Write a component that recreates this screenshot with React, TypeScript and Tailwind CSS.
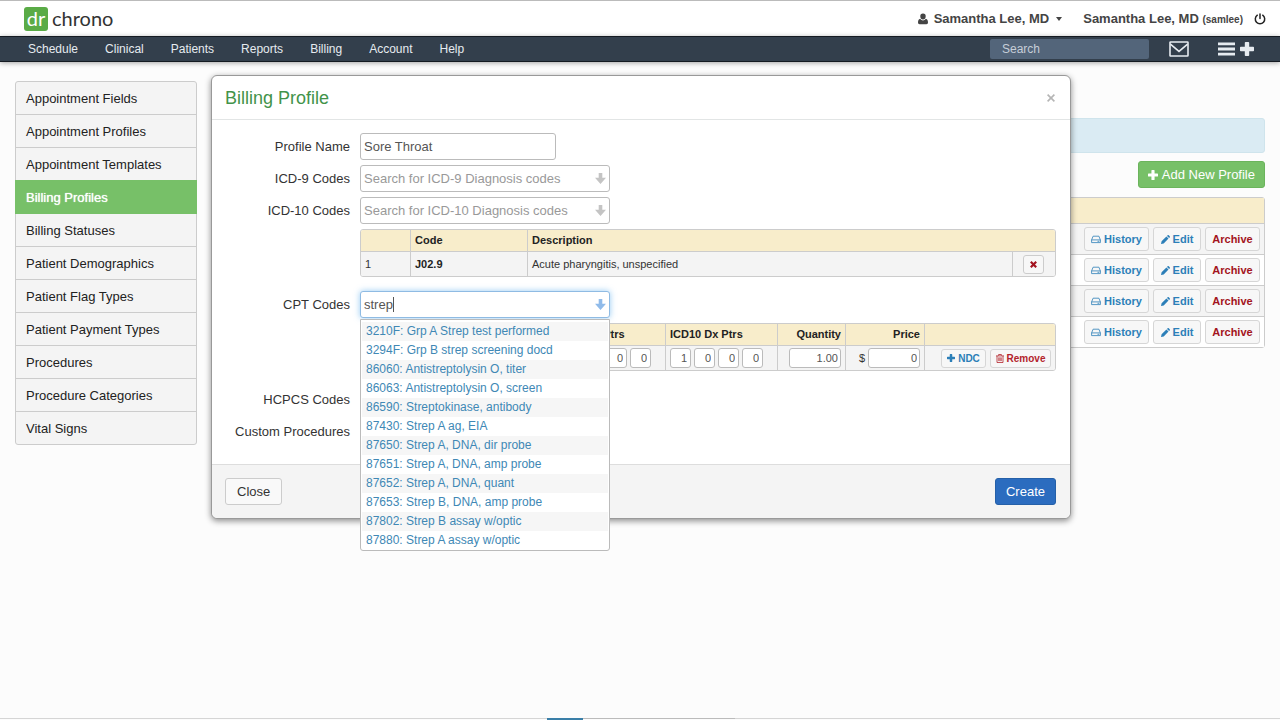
import type { ReactNode } from "react";
import clsx from "clsx";

const navItems = ["Schedule", "Clinical", "Patients", "Reports", "Billing", "Account", "Help"];

const sideItems = [
  "Appointment Fields",
  "Appointment Profiles",
  "Appointment Templates",
  "Billing Profiles",
  "Billing Statuses",
  "Patient Demographics",
  "Patient Flag Types",
  "Patient Payment Types",
  "Procedures",
  "Procedure Categories",
  "Vital Signs",
];

const suggestions = [
  "3210F: Grp A Strep test performed",
  "3294F: Grp B strep screening docd",
  "86060: Antistreptolysin O, titer",
  "86063: Antistreptolysin O, screen",
  "86590: Streptokinase, antibody",
  "87430: Strep A ag, EIA",
  "87650: Strep A, DNA, dir probe",
  "87651: Strep A, DNA, amp probe",
  "87652: Strep A, DNA, quant",
  "87653: Strep B, DNA, amp probe",
  "87802: Strep B assay w/optic",
  "87880: Strep A assay w/optic",
];

/* Icons */
function UserIcon() {
  return (
    <svg className="h-3 w-[10px]" viewBox="0 0 10 12" fill="currentColor" aria-hidden="true">
      <path d="M5 .6a2.700 2.700 0 0 1 2.700 2.800C7.700 5 6.600 6.500 5 6.500S2.300 5 2.300 3.400A2.700 2.700 0 0 1 5 .6z" />
      <path d="M2.200 5.700C3 6.900 3.900 7.400 5 7.400s2-.5 2.800-1.700C9.400 6 10 7.600 10 9.500c0 1-.7 1.700-1.600 1.700H1.600C.7 11.200 0 10.500 0 9.500c0-1.900.6-3.500 2.200-3.800z" />
    </svg>
  );
}

function PowerIcon() {
  return (
    <svg className="h-3 w-3" viewBox="0 0 12 12" fill="none" stroke="currentColor" strokeWidth="1.5" strokeLinecap="round" aria-hidden="true">
      <path d="M3.300 2.200a4.700 4.700 0 1 0 5.400 0M6 .9v4.600" />
    </svg>
  );
}

function EnvelopeIcon() {
  return (
    <svg className="h-4 w-5" viewBox="0 0 20 16" fill="none" stroke="currentColor" strokeWidth="1.6" aria-hidden="true">
      <rect x="1" y="1" width="18" height="14" rx=".6" />
      <path d="M1.400 3.200 10 10.400l8.600-7.200" />
    </svg>
  );
}

function BarsIcon() {
  return (
    <svg className="h-[14px] w-[17px]" viewBox="0 0 17 14" fill="currentColor" aria-hidden="true">
      <path d="M0 .5h17v2.800H0zM0 5.600h17v2.800H0zM0 10.700h17v2.800H0z" />
    </svg>
  );
}

function PlusIcon({ className }: { className: string }) {
  return (
    <svg className={className} viewBox="0 0 14 14" fill="currentColor" aria-hidden="true">
      <path d="M5.600 0h2.800a.8.8 0 0 1 .8.800v4h4a.8.8 0 0 1 .8.800v2.800a.8.8 0 0 1-.8.800h-4v4a.8.8 0 0 1-.8.800H5.600a.8.8 0 0 1-.8-.8v-4h-4A.8.8 0 0 1 0 8.400V5.600a.8.8 0 0 1 .8-.8h4v-4a.8.8 0 0 1 .8-.8z" />
    </svg>
  );
}

function DriveIcon() {
  return (
    <svg className="h-[9px] w-[10px]" viewBox="0 0 10 9" fill="none" stroke="currentColor" strokeWidth=".8" aria-hidden="true">
      <path d="M.6 4.900 2.100 1.200h5.800l1.500 3.700v2.700H.6zM.6 4.900h8.800M6.500 6.300h1.800" />
    </svg>
  );
}

function PencilIcon() {
  return (
    <svg className="h-[9px] w-[9px]" viewBox="0 0 9 9" fill="currentColor" aria-hidden="true">
      <path d="M0 9l.6-2.700 4.800-4.800 2.100 2.100-4.800 4.800zM6 .9l.6-.6a.9.900 0 0 1 1.200 0l.9.900a.9.900 0 0 1 0 1.200l-.6.6z" />
    </svg>
  );
}

function TrashIcon() {
  return (
    <svg className="h-[9px] w-2" viewBox="0 0 8 9" fill="none" stroke="currentColor" strokeWidth=".8" aria-hidden="true">
      <path d="M0 1.900h8M2.600 1.700V.5h2.800v1.200M1 2v6.500h6V2M2.800 3.400v3.700M4 3.400v3.700M5.200 3.400v3.700" />
    </svg>
  );
}

function CrossIcon() {
  return (
    <svg className="h-[7px] w-[7px]" viewBox="0 0 7 7" stroke="currentColor" strokeWidth="2.2" aria-hidden="true">
      <path d="M.8.800l5.400 5.400M6.200.800.8 6.200" />
    </svg>
  );
}

function CloseIcon() {
  return (
    <svg className="h-2 w-2" viewBox="0 0 8 8" stroke="currentColor" strokeWidth="1.6" aria-hidden="true">
      <path d="M.6.600l6.800 6.800M7.400.600.6 7.400" />
    </svg>
  );
}

function ArrowDownIcon({ className }: { className: string }) {
  return (
    <svg className={className} viewBox="0 0 11 11" fill="currentColor" aria-hidden="true">
      <path d="M3.700 0h3.600v4.700H11L5.500 11 0 4.700h3.700z" />
    </svg>
  );
}

/* Form pieces */
function FormRow({ id, label, children }: { id: string; label: string; children: ReactNode }) {
  return (
    <div className="flex gap-[10px]">
      <label htmlFor={id} className="w-[125px] shrink-0 text-right leading-7">
        {label}
      </label>
      <div className="min-w-0 flex-1">{children}</div>
    </div>
  );
}

function SearchBox({ id, placeholder, value, active }: { id: string; placeholder?: string; value?: string; active?: boolean }) {
  return (
    <div className="relative w-[250px]">
      <input
        id={id}
        type="text"
        placeholder={placeholder}
        defaultValue={value}
        className={clsx(
          "block h-[27px] w-full rounded-[3px] border bg-white pr-5 pl-[3px] text-[13px] text-[#555] outline-none placeholder:text-[#999]",
          active ? "border-[#8fbbe3] shadow-[0_0_6px_rgba(82,168,236,0.6)]" : "border-[#bbb]"
        )}
      />
      <ArrowDownIcon
        className={clsx("absolute top-2 right-1 h-[11px] w-[11px]", active ? "text-[#90bbea]" : "text-[#c4c4c4]")}
      />
      {active && <span className="absolute top-[6px] left-[33px] h-[15px] w-px bg-[#555]" />}
    </div>
  );
}

function Pointers({ name, values }: { name: string; values: string[] }) {
  return (
    <div className="flex gap-[3px]">
      {values.map((v, i) => (
        <input
          key={i}
          type="text"
          aria-label={`${name} ${i + 1}`}
          defaultValue={v}
          className="h-5 w-[21px] rounded-[3px] border border-[#bbb] bg-white pr-[3px] text-right text-[11px] text-[#555]"
        />
      ))}
    </div>
  );
}

function SmallButton({ className, children }: { className: string; children: ReactNode }) {
  return (
    <button
      type="button"
      className={clsx("flex items-center justify-center gap-[3px] rounded-[3px] border border-[#d6d6d6] bg-[#f7f7f7] font-bold", className)}
    >
      {children}
    </button>
  );
}

function Header() {
  return (
    <header>
      <div className="flex h-9 items-center justify-between border-t border-[#bbb] bg-white pr-[14px] pl-6">
        <a href="#" className="flex gap-1 font-[Lato,sans-serif] text-[20px] leading-[22px] text-[#333]">
          <span className="h-6 w-6 rounded-[3px] bg-[#5aab46] text-center text-white">dr</span>
          <span>chrono</span>
        </a>
        <div className="flex items-center text-[13px] font-bold text-[#444]">
          <button type="button" className="flex items-center gap-[6px]">
            <UserIcon />
            Samantha Lee, MD
            <span className="ml-px border-x-3 border-t-4 border-x-transparent border-t-[#444]" />
          </button>
          <span className="ml-[21px]">
            Samantha Lee, MD <span className="text-[10px]">(samlee)</span>
          </span>
          <button type="button" aria-label="Log out" className="ml-[11px] text-[#222]">
            <PowerIcon />
          </button>
        </div>
      </div>
      <nav className="flex h-[26px] items-center border-y border-[#151b22] bg-[#333f4c] pr-[26px] pl-7 text-[12px] text-[#e6ebf0] shadow-[0_1px_5px_rgba(0,0,0,0.35)]">
        <div className="flex flex-1 gap-[27px]">
          {navItems.map((item) => (
            <a key={item} href="#">
              {item}
            </a>
          ))}
        </div>
        <input
          type="search"
          aria-label="Search"
          placeholder="Search"
          className="h-5 w-[159px] rounded-[2px] bg-[#53657a] px-3 text-[12px] placeholder:text-[#c6ced8]"
        />
        <button type="button" aria-label="Messages" className="ml-5">
          <EnvelopeIcon />
        </button>
        <button type="button" aria-label="Menu" className="ml-[29px] flex items-center gap-[5px]">
          <BarsIcon />
          <PlusIcon className="h-[14px] w-[14px]" />
        </button>
      </nav>
    </header>
  );
}

function Sidebar() {
  return (
    <aside className="w-[182px] shrink-0">
      <ul className="rounded-[3px] border border-[#ccc] bg-[#f4f4f4] text-[13px] text-[#222]">
        {sideItems.map((item) => (
          <li key={item} className="border-b border-[#ccc] last:border-b-0">
            <a
              href="#"
              className={clsx(
                "block leading-[31px]",
                item === "Billing Profiles"
                  ? "-m-px bg-[#77c068] px-[11px] pt-[2px] pb-px text-white [text-shadow:0_0_1px_white]"
                  : "px-[10px] pt-px"
              )}
            >
              {item}
            </a>
          </li>
        ))}
      </ul>
    </aside>
  );
}

function ProfileList() {
  return (
    <main className="min-w-0 flex-1 pt-[37px]">
      <div className="h-[35px] rounded-[3px] border border-[#cfe4ec] bg-[#daebf3]" />
      <div className="mt-2 flex justify-end">
        <button type="button" className="flex h-[27px] items-center gap-1 rounded-[3px] border border-[#6bb45c] bg-[#77c068] px-[9px] text-[13px] text-white">
          <PlusIcon className="h-[10px] w-[10px]" />
          Add New Profile
        </button>
      </div>
      <table className="mt-[9px] w-full border-separate border-spacing-0 rounded-[3px] border border-[#ccc] text-[11px]">
        <thead>
          <tr>
            <th className="h-[25px] bg-[#f8edcb]" />
            <th className="h-[25px] bg-[#f8edcb]" />
          </tr>
        </thead>
        <tbody>
          {[0, 1, 2, 3].map((row) => (
            <tr key={row} className="odd:bg-[#f4f4f4] even:bg-white">
              <td className="border-t border-[#ccc]" />
              <td className="h-[31px] border-t border-[#ccc] pr-1">
                <div className="flex justify-end gap-1">
                  <SmallButton className="h-6 w-[65px] text-[#2c7fb8]">
                    <DriveIcon />
                    History
                  </SmallButton>
                  <SmallButton className="h-6 w-12 text-[#2c7fb8]">
                    <PencilIcon />
                    Edit
                  </SmallButton>
                  <SmallButton className="h-6 w-[55px] text-[#a31320]">Archive</SmallButton>
                </div>
              </td>
            </tr>
          ))}
        </tbody>
      </table>
    </main>
  );
}

const th = "h-[21px] border-[#ccc] bg-[#f8edcb] px-1 text-left font-bold text-[#222]";
const td = "h-[25px] border-t border-[#ccc] bg-[#f4f4f4] px-1";

function DiagnosisTable() {
  return (
    <table className="w-full table-fixed border-separate border-spacing-0 overflow-hidden rounded-[3px] border border-[#ccc] text-[11px]">
      <colgroup>
        <col className="w-[49px]" />
        <col className="w-[117px]" />
        <col />
        <col className="w-[43px]" />
      </colgroup>
      <thead>
        <tr>
          <th className={th} />
          <th className={clsx(th, "border-l")}>Code</th>
          <th className={clsx(th, "border-l")} colSpan={2}>
            Description
          </th>
        </tr>
      </thead>
      <tbody>
        <tr>
          <td className={td}>1</td>
          <td className={clsx(td, "border-l font-bold text-[#222]")}>J02.9</td>
          <td className={clsx(td, "border-l")}>Acute pharyngitis, unspecified</td>
          <td className={clsx(td, "border-l")}>
            <div className="flex justify-center">
              <button type="button" aria-label="Remove J02.9" className="flex h-[19px] w-[21px] items-center justify-center rounded-[3px] border border-[#ccc] bg-[#f7f7f7] text-[#a31320]">
                <CrossIcon />
              </button>
            </div>
          </td>
        </tr>
      </tbody>
    </table>
  );
}

function ProcedureTable() {
  return (
    <table className="w-full table-fixed border-separate border-spacing-0 overflow-hidden rounded-[3px] border border-[#ccc] text-[11px]">
      <colgroup>
        <col />
        <col className="w-[112px]" />
        <col className="w-[112px]" />
        <col className="w-[68px]" />
        <col className="w-[79px]" />
        <col className="w-[131px]" />
      </colgroup>
      <thead>
        <tr>
          <th className={th} />
          <th className={clsx(th, "border-l")}>ICD9 Dx Ptrs</th>
          <th className={clsx(th, "border-l")}>ICD10 Dx Ptrs</th>
          <th className={clsx(th, "border-l")}>
            <div className="text-right">Quantity</div>
          </th>
          <th className={clsx(th, "border-l")}>
            <div className="text-right">Price</div>
          </th>
          <th className={clsx(th, "border-l")} />
        </tr>
      </thead>
      <tbody>
        <tr>
          <td className={td} />
          <td className={clsx(td, "border-l")}>
            <Pointers name="ICD9 pointer" values={["0", "0", "0", "0"]} />
          </td>
          <td className={clsx(td, "border-l")}>
            <Pointers name="ICD10 pointer" values={["1", "0", "0", "0"]} />
          </td>
          <td className={clsx(td, "border-l")}>
            <div className="flex justify-end">
              <input type="text" aria-label="Quantity" defaultValue="1.00" className="h-5 w-[52px] rounded-[3px] border border-[#bbb] bg-white pr-[2px] text-right text-[#555]" />
            </div>
          </td>
          <td className={clsx(td, "border-l")}>
            <div className="flex items-center justify-end gap-[3px]">
              $
              <input type="text" aria-label="Price" defaultValue="0" className="h-5 w-[52px] rounded-[3px] border border-[#bbb] bg-white pr-[2px] text-right text-[#555]" />
            </div>
          </td>
          <td className={clsx(td, "border-l")}>
            <div className="flex justify-end gap-1 text-[10px]">
              <SmallButton className="h-[19px] w-[45px] text-[#2c7fb8]">
                <PlusIcon className="h-2 w-2" />
                NDC
              </SmallButton>
              <SmallButton className="h-[19px] w-[61px] text-[#b3242c]">
                <TrashIcon />
                Remove
              </SmallButton>
            </div>
          </td>
        </tr>
      </tbody>
    </table>
  );
}

function BillingProfileDialog() {
  return (
    <div className="absolute inset-x-0 top-[75px] flex justify-center pl-[2px]">
      <section
        role="dialog"
        aria-labelledby="dialog-title"
        className="w-[860px] max-w-full rounded-[6px] border border-[#999] bg-white text-[13px] text-[#333] shadow-[0_2px_6px_rgba(0,0,0,0.45)]"
      >
        <div className="flex h-11 items-center justify-between border-b border-[#e2e5e5] pr-[15px] pl-[13px]">
          <h2 id="dialog-title" className="pt-px text-[18px] text-[#42934a]">
            Billing Profile
          </h2>
          <button type="button" aria-label="Close dialog" className="text-[#b5b5b5]">
            <CloseIcon />
          </button>
        </div>

        <form className="flex flex-col gap-1 pt-[13px] pr-[14px] pb-[18px] pl-[13px]">
          <FormRow id="profile-name" label="Profile Name">
            <input
              id="profile-name"
              type="text"
              defaultValue="Sore Throat"
              className="block h-[27px] w-[196px] rounded-[3px] border border-[#bbb] px-[3px] text-[#555]"
            />
          </FormRow>
          <FormRow id="icd9" label="ICD-9 Codes">
            <SearchBox id="icd9" placeholder="Search for ICD-9 Diagnosis codes" />
          </FormRow>
          <FormRow id="icd10" label="ICD-10 Codes">
            <SearchBox id="icd10" placeholder="Search for ICD-10 Diagnosis codes" />
            <div className="mt-[5px] mb-[10px]">
              <DiagnosisTable />
            </div>
          </FormRow>
          <FormRow id="cpt" label="CPT Codes">
            <div className="relative">
              <SearchBox id="cpt" value="strep" active />
              <ul className="absolute top-7 left-0 z-10 w-[250px] rounded-b-[3px] border border-[#bbb] bg-white px-px pt-[2px] text-[12px] text-[#4088b5]">
                {suggestions.map((s) => (
                  <li key={s} className="odd:bg-[#f6f6f6]">
                    <a href="#" className="block px-1 leading-[19px]">
                      {s}
                    </a>
                  </li>
                ))}
              </ul>
            </div>
            <div className="mt-[5px] mb-[11px]">
              <ProcedureTable />
            </div>
          </FormRow>
          <FormRow id="hcpcs" label="HCPCS Codes">
            <SearchBox id="hcpcs" />
          </FormRow>
          <FormRow id="custom" label="Custom Procedures">
            <SearchBox id="custom" />
          </FormRow>
        </form>

        <div className="flex h-[54px] items-center justify-between rounded-b-[6px] border-t border-[#ddd] bg-[#f4f4f4] pr-[14px] pl-[13px]">
          <button type="button" className="h-[27px] rounded-[3px] border border-[#ccc] bg-[#f9f9f9] px-[11px]">
            Close
          </button>
          <button type="button" className="h-[27px] rounded-[3px] border border-[#2560a8] bg-[#2b6cbf] px-[10px] text-white">
            Create
          </button>
        </div>
      </section>
    </div>
  );
}

export default function App() {
  return (
    <div className="relative flex min-h-screen flex-col bg-[#fcfcfc] font-['Liberation_Sans',Arial,sans-serif] text-[#333]">
      <Header />
      <div className="flex items-start gap-[15px] px-[15px] pt-[19px]">
        <Sidebar />
        <ProfileList />
      </div>
      <BillingProfileDialog />

      {/* Bottom edge strip */}
      <div className="mt-auto flex h-[2px] border-t border-[#d5d5d5] pl-[547px]">
        <div className="-mt-px h-[2px] w-9 bg-[#3a7fa8]" />
        <div className="-mt-px h-px w-[152px] bg-[#bbb]" />
      </div>
    </div>
  );
}
